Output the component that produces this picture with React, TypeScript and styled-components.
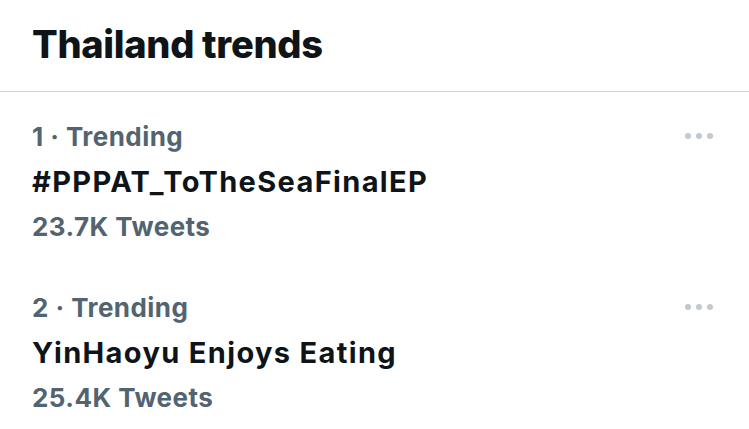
import React from "react";
import styled, { createGlobalStyle } from "styled-components";

const Global = createGlobalStyle`
  html, body { margin: 0; padding: 0; background: #ffffff; }
  body { font-family: Inter, "Liberation Sans", Arial, sans-serif; -webkit-font-smoothing: antialiased; }
`;

const Panel = styled.div`
  width: 749px;
  background: #ffffff;
`;

const Header = styled.div`
  padding: 21px 32px 24px;
  border-bottom: 1px solid #d4d6d8;
`;

const Title = styled.h2`
  margin: 0;
  font-size: 38px;
  line-height: 46px;
  font-weight: 800;
  color: #0f1419;
  letter-spacing: -0.3px;
`;

const Row = styled.div`
  display: flex;
  align-items: flex-start;
  justify-content: space-between;
  padding: 22px 36px 14px 32px;
`;

const Info = styled.div`
  display: flex;
  flex-direction: column;
`;

const Meta = styled.div`
  font-size: 26px;
  line-height: 45px;
  font-weight: 700;
  letter-spacing: 0.45px;
  color: #536471;
`;

const Name = styled.div`
  font-size: 29px;
  line-height: 45px;
  font-weight: 700;
  letter-spacing: 1.35px;
  color: #0f1419;
`;

const Dots = styled.div`
  display: flex;
  gap: 5px;
  margin-top: 19px;
`;

const Dot = styled.span`
  width: 6px;
  height: 6px;
  border-radius: 50%;
  background: #c2c9cf;
`;

const trends = [
  { rank: 1, name: "#PPPAT_ToTheSeaFinalEP", count: "23.7K Tweets" },
  { rank: 2, name: "YinHaoyu Enjoys Eating", count: "25.4K Tweets" },
];

export default function App() {
  return (
    <Panel>
      <Global />
      <Header>
        <Title>Thailand trends</Title>
      </Header>
      {trends.map((t) => (
        <Row key={t.rank}>
          <Info>
            <Meta>{t.rank} · Trending</Meta>
            <Name>{t.name}</Name>
            <Meta>{t.count}</Meta>
          </Info>
          <Dots>
            <Dot />
            <Dot />
            <Dot />
          </Dots>
        </Row>
      ))}
    </Panel>
  );
}
